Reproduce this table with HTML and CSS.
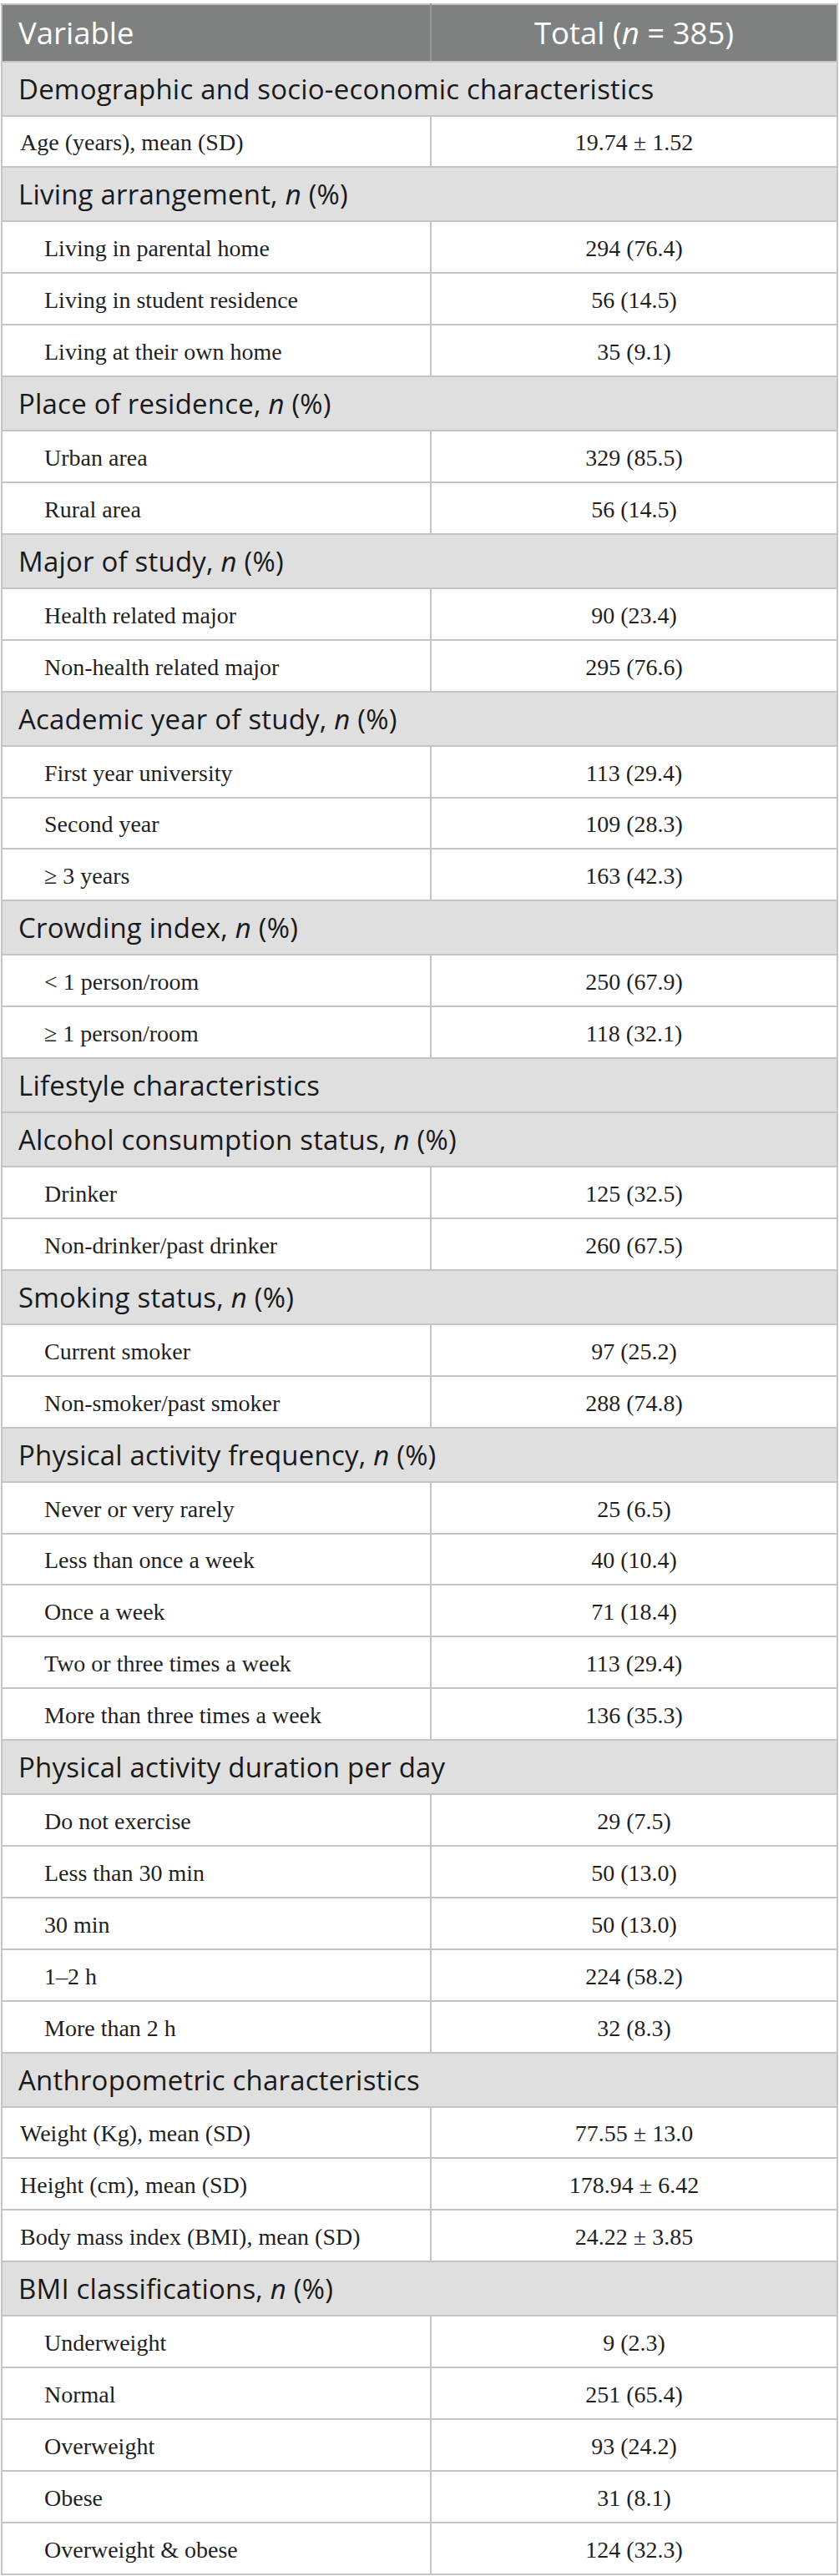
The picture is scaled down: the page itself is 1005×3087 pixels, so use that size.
FILE: index.html
```html
<!DOCTYPE html>
<html lang="en">
<head>
    <meta charset="UTF-8">
    <meta name="viewport" content="width=device-width, initial-scale=1.0">
    <title>Participant characteristics</title>
    <link rel="stylesheet" href="styles.css">
</head>
<body>
    <table class="char-table">
        <colgroup>
            <col class="col-var">
            <col class="col-total">
        </colgroup>
        <thead>
            <tr>
                <th class="left">Variable</th>
                <th>Total (<i>n</i> = 385)</th>
            </tr>
        </thead>
        <tbody>
            <tr class="group"><td colspan="2">Demographic and socio-economic characteristics</td></tr>
            <tr><td>Age (years), mean (SD)</td><td>19.74 ± 1.52</td></tr>

            <tr class="group"><td colspan="2">Living arrangement, <i>n</i> (%)</td></tr>
            <tr><td class="sub">Living in parental home</td><td>294 (76.4)</td></tr>
            <tr><td class="sub">Living in student residence</td><td>56 (14.5)</td></tr>
            <tr><td class="sub">Living at their own home</td><td>35 (9.1)</td></tr>

            <tr class="group"><td colspan="2">Place of residence, <i>n</i> (%)</td></tr>
            <tr><td class="sub">Urban area</td><td>329 (85.5)</td></tr>
            <tr><td class="sub">Rural area</td><td>56 (14.5)</td></tr>

            <tr class="group"><td colspan="2">Major of study, <i>n</i> (%)</td></tr>
            <tr><td class="sub">Health related major</td><td>90 (23.4)</td></tr>
            <tr><td class="sub">Non-health related major</td><td>295 (76.6)</td></tr>

            <tr class="group"><td colspan="2">Academic year of study, <i>n</i> (%)</td></tr>
            <tr><td class="sub">First year university</td><td>113 (29.4)</td></tr>
            <tr><td class="sub">Second year</td><td>109 (28.3)</td></tr>
            <tr><td class="sub">≥ 3 years</td><td>163 (42.3)</td></tr>

            <tr class="group"><td colspan="2">Crowding index, <i>n</i> (%)</td></tr>
            <tr><td class="sub">&lt; 1 person/room</td><td>250 (67.9)</td></tr>
            <tr><td class="sub">≥ 1 person/room</td><td>118 (32.1)</td></tr>

            <tr class="group"><td colspan="2">Lifestyle characteristics</td></tr>

            <tr class="group"><td colspan="2">Alcohol consumption status, <i>n</i> (%)</td></tr>
            <tr><td class="sub">Drinker</td><td>125 (32.5)</td></tr>
            <tr><td class="sub">Non-drinker/past drinker</td><td>260 (67.5)</td></tr>

            <tr class="group"><td colspan="2">Smoking status, <i>n</i> (%)</td></tr>
            <tr><td class="sub">Current smoker</td><td>97 (25.2)</td></tr>
            <tr><td class="sub">Non-smoker/past smoker</td><td>288 (74.8)</td></tr>

            <tr class="group"><td colspan="2">Physical activity frequency, <i>n</i> (%)</td></tr>
            <tr><td class="sub">Never or very rarely</td><td>25 (6.5)</td></tr>
            <tr><td class="sub">Less than once a week</td><td>40 (10.4)</td></tr>
            <tr><td class="sub">Once a week</td><td>71 (18.4)</td></tr>
            <tr><td class="sub">Two or three times a week</td><td>113 (29.4)</td></tr>
            <tr><td class="sub">More than three times a week</td><td>136 (35.3)</td></tr>

            <tr class="group"><td colspan="2">Physical activity duration per day</td></tr>
            <tr><td class="sub">Do not exercise</td><td>29 (7.5)</td></tr>
            <tr><td class="sub">Less than 30 min</td><td>50 (13.0)</td></tr>
            <tr><td class="sub">30 min</td><td>50 (13.0)</td></tr>
            <tr><td class="sub">1–2 h</td><td>224 (58.2)</td></tr>
            <tr><td class="sub">More than 2 h</td><td>32 (8.3)</td></tr>

            <tr class="group"><td colspan="2">Anthropometric characteristics</td></tr>
            <tr><td>Weight (Kg), mean (SD)</td><td>77.55 ± 13.0</td></tr>
            <tr><td>Height (cm), mean (SD)</td><td>178.94 ± 6.42</td></tr>
            <tr><td>Body mass index (BMI), mean (SD)</td><td>24.22 ± 3.85</td></tr>

            <tr class="group"><td colspan="2">BMI classifications, <i>n</i> (%)</td></tr>
            <tr><td class="sub">Underweight</td><td>9 (2.3)</td></tr>
            <tr><td class="sub">Normal</td><td>251 (65.4)</td></tr>
            <tr><td class="sub">Overweight</td><td>93 (24.2)</td></tr>
            <tr><td class="sub">Obese</td><td>31 (8.1)</td></tr>
            <tr><td class="sub">Overweight &amp; obese</td><td>124 (32.3)</td></tr>
        </tbody>
    </table>
</body>
</html>
```
FILE: styles.css
```css
body {
    margin: 0;
    background-color: #fff;
    font-family: "Liberation Serif", "Times New Roman", serif;
    color: #1f1f1f;
}
.char-table {
    width: 1003px;
    margin: 4px 0 0 1px;
    border-collapse: collapse;
    table-layout: fixed;
}
.col-var {
    width: 514px;
}
.char-table th {
    height: 66.5px;
    padding: 0 20px;
    background-color: #7f8080;
    color: #fff;
    font-family: "Open Sans", "Noto Sans", sans-serif;
    font-size: 36.5px;
    font-weight: 400;
    text-align: center;
    vertical-align: middle;
    border: 2px solid #c4c4c4;
    border-right-color: #9a9a9a;
    white-space: nowrap;
}
.char-table th:last-child {
    border-right-color: #c4c4c4;
    border-left-color: #9a9a9a;
}
.char-table th.left {
    text-align: left;
    padding-left: 19px;
}
.char-table td {
    height: 55.9px;
    padding: 4px 20px 0;
    font-size: 28px;
    text-align: center;
    vertical-align: middle;
    border: 2px solid #c4c4c4;
    white-space: nowrap;
}
.char-table td:first-child {
    text-align: left;
    padding-left: 21px;
}
.char-table td.sub {
    padding-left: 50px;
}
.char-table tr.group td {
    height: 63px;
    padding: 0 20px 0 19px;
    background-color: #e0dfe0;
    color: #1a1a1a;
    font-family: "Open Sans", "Noto Sans", sans-serif;
    font-size: 33px;
    letter-spacing: 0.2px;
}
```
